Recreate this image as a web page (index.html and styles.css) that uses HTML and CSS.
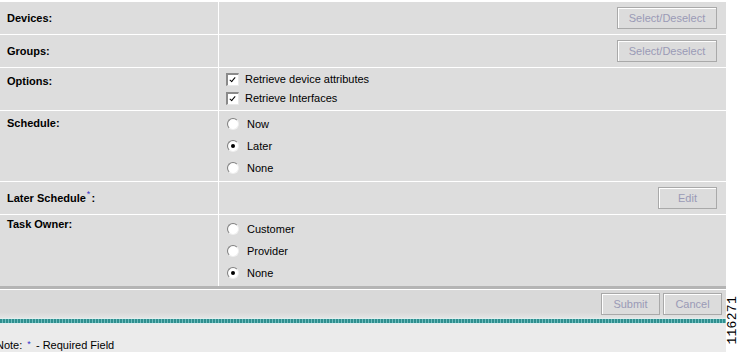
FILE: index.html
```html
<!DOCTYPE html>
<html lang="en">
<head>
  <meta charset="UTF-8" />
  <title>Task Options</title>
  <link rel="stylesheet" href="styles.css">
</head>
<body>
  <div class="page">
    <div class="form">
      <div class="row row-sm">
        <div class="label mid">Devices:</div>
        <div class="field right"><button class="btn btn-wide">Select/Deselect</button></div>
      </div>
      <div class="row row-sm">
        <div class="label mid">Groups:</div>
        <div class="field right"><button class="btn btn-wide">Select/Deselect</button></div>
      </div>
      <div class="row row-options">
        <div class="label top">Options:</div>
        <div class="field list">
          <div class="check-line"><span class="check on"></span>Retrieve device attributes</div>
          <div class="check-line"><span class="check on"></span>Retrieve Interfaces</div>
        </div>
      </div>
      <div class="row row-radio">
        <div class="label top">Schedule:</div>
        <div class="field list">
          <div class="radio-line"><span class="radio"></span>Now</div>
          <div class="radio-line"><span class="radio on"></span>Later</div>
          <div class="radio-line"><span class="radio"></span>None</div>
        </div>
      </div>
      <div class="row row-sm">
        <div class="label mid">Later Schedule<sup class="req">*</sup>:</div>
        <div class="field right"><button class="btn">Edit</button></div>
      </div>
      <div class="row row-radio last">
        <div class="label top">Task Owner:</div>
        <div class="field list">
          <div class="radio-line"><span class="radio"></span>Customer</div>
          <div class="radio-line"><span class="radio"></span>Provider</div>
          <div class="radio-line"><span class="radio on"></span>None</div>
        </div>
      </div>
    </div>

    <div class="actions">
      <button class="btn">Submit</button>
      <button class="btn">Cancel</button>
    </div>
    <div class="rule"></div>
    <div class="note">Note: <span class="req">*</span> - Required Field</div>
  </div>

  <div class="side">
    <span class="figno">116271</span>
  </div>
</body>
</html>
```

FILE: styles.css
```css
* {
  box-sizing: border-box;
  margin: 0;
  padding: 0;
}

body {
  font-family: 'Liberation Sans', Arial, sans-serif;
  font-size: 11px;
  color: #000;
  background-color: #fff;
  display: flex;
  width: 739px;
  height: 352px;
  overflow: hidden;
}

.page {
  flex: none;
  width: 726px;
  display: flex;
  flex-direction: column;
  background-color: #ebebeb;
}

.form {
  border-top: 2px solid #fff;
  background-color: #dddddd;
}

.row {
  display: grid;
  grid-template-columns: 219px 1fr;
  border-bottom: 1px solid #fff;
}

.row.last {
  border-bottom: none;
  height: 71px;
}

.row-sm { height: 33px; }
.row-options { height: 43px; }
.row-radio { height: 71px; }

.label {
  border-right: 1px solid #fff;
  padding-left: 7px;
  font-weight: bold;
  line-height: 13px;
}

.label.mid {
  display: flex;
  align-items: center;
}

.label.top {
  padding-top: 6px;
}

.row-options .label.top {
  padding-top: 7px;
}

.row.last .label.top {
  padding-top: 3px;
}

.req {
  color: #3333cc;
  font-weight: normal;
  font-size: 9px;
}

.label .req {
  position: relative;
  top: -4px;
  vertical-align: top;
  margin: 0 1px;
}

.field.right {
  display: flex;
  align-items: center;
  justify-content: flex-end;
  padding-right: 9px;
}

.field.list {
  padding: 2px 0 0 7px;
}

.row.last .field.list {
  padding-top: 3px;
}

.check-line {
  height: 19px;
  display: flex;
  align-items: center;
  line-height: 13px;
}

.radio-line {
  height: 22px;
  display: flex;
  align-items: center;
  line-height: 13px;
  padding-left: 1px;
}

.check {
  width: 13px;
  height: 13px;
  margin-right: 6px;
  background-color: #fff;
  border-style: solid;
  border-width: 2px 1px 1px 2px;
  border-color: #8a8a8a #e8e8e8 #e8e8e8 #8a8a8a;
  position: relative;
}

.check.on::after {
  content: '';
  position: absolute;
  left: 3px;
  top: 1px;
  width: 2px;
  height: 5px;
  border: solid #000;
  border-width: 0 1.5px 1.5px 0;
  transform: rotate(40deg);
}

.radio {
  width: 12px;
  height: 12px;
  margin-right: 8px;
  border-radius: 50%;
  background: radial-gradient(circle at 60% 60%, #ffffff 55%, #eeeeee 100%);
  border: 1px solid;
  border-color: #808080 #f0f0f0 #f0f0f0 #808080;
  display: flex;
  align-items: center;
  justify-content: center;
}

.radio.on::after {
  content: '';
  width: 4px;
  height: 4px;
  border-radius: 50%;
  background-color: #000;
}

.btn {
  font-family: 'Liberation Sans', Arial, sans-serif;
  font-size: 11px;
  color: #9a9ab6;
  height: 22px;
  width: 59px;
  background-color: #dcdcdc;
  border: 1px solid #a9a9a9;
  box-shadow: inset 1px 1px 0 #fff;
}

.btn-wide {
  width: 100px;
}

.actions {
  border-top: 3px solid #b4b4b4;
  box-shadow: inset 0 1px 0 #fff;
  height: 32px;
  padding: 4px 4px 0 0;
  display: flex;
  justify-content: flex-end;
  align-items: flex-start;
  gap: 3px;
  background: linear-gradient(#d9d9d9 80%, #e4e4e4);
}

.rule {
  height: 6px;
  border-top: 1px solid #e2eeee;
  border-bottom: 1px solid #dfeeee;
  background: repeating-linear-gradient(90deg, #2f8f8f 0 2px, #6fbdbd 2px 3px);
}

.note {
  padding-top: 15px;
  text-indent: -4px;
  line-height: 13px;
  white-space: nowrap;
}

.note .req {
  vertical-align: top;
  position: relative;
  top: -1px;
  margin: 0 2px;
}

.side {
  flex: none;
  width: 13px;
  display: flex;
  flex-direction: column;
  justify-content: flex-end;
  align-items: center;
  padding-bottom: 7px;
}

.figno {
  writing-mode: vertical-rl;
  transform: rotate(180deg);
  font-family: 'Liberation Mono', monospace;
  font-size: 13px;
  line-height: 13px;
  letter-spacing: 0.3px;
  color: #000;
}
```
